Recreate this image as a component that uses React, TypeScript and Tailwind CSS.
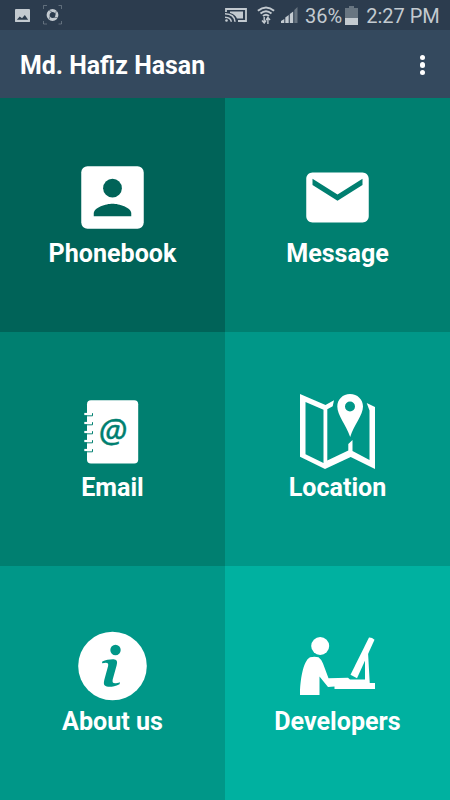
import type { ReactNode } from "react";

interface MenuTileProps {
  label: string;
  color: string;
  children: ReactNode;
}

const MenuTile = ({ label, color, children }: MenuTileProps) => {
  return (
    <button className={`flex flex-col items-center pt-[62px] ${color}`}>
      {children}
      <span className="mt-1 text-[25.1px] leading-[30px] font-bold text-white">{label}</span>
    </button>
  );
};

const PhonebookIcon = () => (
  <svg viewBox="0 0 24 24" className="size-[75px]" aria-hidden="true">
    <rect x="2" y="2" width="20" height="20" rx="2" fill="#fff" />
    <g fill="#006358">
      <circle cx="12" cy="9" r="3" />
      <path d="M6 17.1c0-2 4-3.1 6-3.1s6 1.1 6 3.1v.9H6z" />
    </g>
  </svg>
);

const MessageIcon = () => (
  <svg viewBox="0 0 24 24" fill="#fff" className="size-[75px]" aria-hidden="true">
    <path d="M20 4H4c-1.1 0-2 .9-2 2v12c0 1.1.9 2 2 2h16c1.1 0 2-.9 2-2V6c0-1.1-.9-2-2-2zm0 4l-8 5-8-5V6l8 5 8-5v2z" />
  </svg>
);

const EmailIcon = () => (
  <svg viewBox="0 0 75 75" className="size-[75px]" aria-hidden="true">
    <rect x="12" y="6.2" width="51.2" height="63.3" rx="4" fill="#fff" />
    {[20, 29, 38, 47, 56].map((y) => (
      <g key={y}>
        <path d={`M10.5 ${y + 1.8}h7v-2.6`} fill="none" stroke="#007f70" strokeWidth="1" />
        <path d={`M9.3 ${y}h7.5`} stroke="#fff" strokeWidth="2.2" />
      </g>
    ))}
    <text
      x="37.7"
      y="49"
      textAnchor="middle"
      fontSize="33"
      fill="#007f70"
      stroke="#007f70"
      strokeWidth=".4"
      className="font-['Noto_Sans',sans-serif] font-normal italic"
    >
      @
    </text>
  </svg>
);

const LocationIcon = () => (
  <svg viewBox="0 0 75 75" className="size-[75px]" aria-hidden="true">
    <path
      d="M0 0L25.5 11L34 6.2L32.7 12.3L27.3 15.2V66.5L48.3 56.5V50L52.5 46V57L69.5 66V16.5L66.7 9L75 13V75L50.7 63L25 75L0 62.8ZM5.5 8V60.3L23.5 69V15.8Z"
      fill="#fff"
      fillRule="evenodd"
    />
    <path
      d="M50 0C42.8 0 37.3 5.5 37.3 12.5C37.3 21 46 31 50.2 43C54 31 63 21 63 12.5C63 5.5 57.5 0 50 0ZM50 7.5A5 5 0 1 1 50 17.5A5 5 0 1 1 50 7.5Z"
      fill="#fff"
      fillRule="evenodd"
    />
  </svg>
);

const AboutIcon = () => (
  <svg viewBox="0 0 75 75" className="size-[75px]" aria-hidden="true">
    <circle cx="37.5" cy="38" r="34.3" fill="#fff" />
    <g fill="#009788">
      <circle cx="40.5" cy="22" r="5.2" />
      <path d="M27.3 33.5C31 32 36 31 39.5 31.4C42.7 32 42.3 34.5 41.6 37.5L37.7 51.5C36.9 55.5 39 56.2 45 54.3L44.5 56.3C39 58.8 35 59.3 31.7 58.5C28.7 57.6 28.4 55.5 29.4 51.5L33.1 38C33.8 34.7 32 34.3 27 35.3Z" />
    </g>
  </svg>
);

const DevelopersIcon = () => (
  <svg viewBox="0 0 75 75" fill="#fff" className="size-[75px]" aria-hidden="true">
    <circle cx="20.2" cy="18" r="9" />
    <path d="M10 29.3Q14.5 28.3 18.5 29.3Q21 31 23 35.5L28.5 50.3L48 49.8L50 51.5H65.2V55H75V61H34.5V58.5L28 59L19.5 48.5V67H0C0 53 3 33 10 29.3Z" />
    <path d="M69 9.5Q72 9.3 74.5 11.7L57 50.3L50.5 46.8Z" />
    <path d="M66.5 24H68L69.8 56H65V32L62 36Z" />
  </svg>
);

const StatusBar = () => (
  <div className="flex h-[30px] items-center bg-[#2c3c4e] text-[#c3cad0]">
    <svg viewBox="0 0 16 16" fill="currentColor" className="ml-[15px] size-[15px]" aria-hidden="true">
      <path
        d="M1 1H15Q16 1 16 2V14Q16 15 15 15H1Q0 15 0 14V2Q0 1 1 1ZM2 12.5H14L10.5 7.5L7.5 11L5 9Z"
        fillRule="evenodd"
      />
    </svg>
    <svg viewBox="0 0 20 20" className="ml-[13px] size-5" fill="none" stroke="currentColor" aria-hidden="true">
      <path d="M.5 4V.5H4M15.5 .5H18.5V4M.5 16V19H4M15.5 19H18.5V16" opacity=".35" />
      <circle cx="9.5" cy="10" r="4.4" strokeWidth="3" />
      <path d="M5.5 5L9.5 7.5M13.5 5.5L12 10M14.5 12.5L10.5 12.5M6 14.5L7.5 10" stroke="#2c3c4e" strokeWidth=".5" />
    </svg>
    <svg viewBox="0 0 22 16" className="ml-[162px] h-4 w-[22px]" fill="none" stroke="currentColor" aria-hidden="true">
      <path d="M1 5V2H21V14H13" strokeWidth="1.8" />
      <path d="M5 4.5H18V11.5H12Q10 7 5 6Z" fill="currentColor" stroke="none" />
      <path d="M0 6.7Q9.5 7 10 14.8M0 10.2Q6 10.5 6.3 14.8" strokeWidth="1.6" />
      <circle cx="1.5" cy="13.5" r="1.3" fill="currentColor" stroke="none" />
    </svg>
    <svg viewBox="0 0 18 18" className="ml-[10px] size-[18px]" fill="none" stroke="currentColor" aria-hidden="true">
      <path d="M.9 4.8Q9-1.8 17.1 4.8M3.5 7.5Q9 3 14.5 7.5M6 10.1Q9 7.5 12 10.1" strokeWidth="2" />
      <path d="M7.2 11V17M5 14.5L7.2 17L9 14.5M10.9 18V12M9.2 14L10.9 11.5L13 14" strokeWidth="1.4" />
    </svg>
    <svg viewBox="0 0 17 16" className="ml-[6px] h-4 w-[17px]" fill="currentColor" aria-hidden="true">
      <path d="M0 16V14L3.3 12V16ZM4.3 16V10.5L7.7 8V16ZM8.8 16V7L12.2 4.5V16Z" />
      <path d="M13.3 16V3L16.5 0V16Z" opacity=".4" />
    </svg>
    <span className="ml-[7px] pt-[2px] text-[20px]">36%</span>
    <svg viewBox="0 0 13 19" className="ml-[3px] h-[19px] w-[13px]" fill="currentColor" aria-hidden="true">
      <path d="M4 0H9V2H13V12H0V2H4Z" opacity=".4" />
      <path d="M0 12H13V19H0Z" />
    </svg>
    <span className="ml-2 pt-[2px] text-[20px]">2:27 PM</span>
  </div>
);

export default function App() {
  return (
    <div className="flex h-[800px] w-[450px] flex-col overflow-hidden font-[Roboto,sans-serif]">
      <StatusBar />
      <header className="flex h-[68px] items-center justify-between bg-[#34495e] pt-[2px] pr-[25px] pl-5">
        <h1 className="pt-px text-[24.9px] font-bold text-white">Md. Hafiz Hasan</h1>
        <button className="flex flex-col gap-[2px]" aria-label="More options">
          <span className="size-[5.5px] rounded-full bg-white" />
          <span className="size-[5.5px] rounded-full bg-white" />
          <span className="size-[5.5px] rounded-full bg-white" />
        </button>
      </header>
      <main className="grid flex-1 grid-cols-2 grid-rows-3">
        <MenuTile label="Phonebook" color="bg-[#006358]">
          <PhonebookIcon />
        </MenuTile>
        <MenuTile label="Message" color="bg-[#007f70]">
          <MessageIcon />
        </MenuTile>
        <MenuTile label="Email" color="bg-[#007f70]">
          <EmailIcon />
        </MenuTile>
        <MenuTile label="Location" color="bg-[#009788]">
          <LocationIcon />
        </MenuTile>
        <MenuTile label="About us" color="bg-[#009788]">
          <AboutIcon />
        </MenuTile>
        <MenuTile label="Developers" color="bg-[#00b1a0]">
          <DevelopersIcon />
        </MenuTile>
      </main>
    </div>
  );
}
